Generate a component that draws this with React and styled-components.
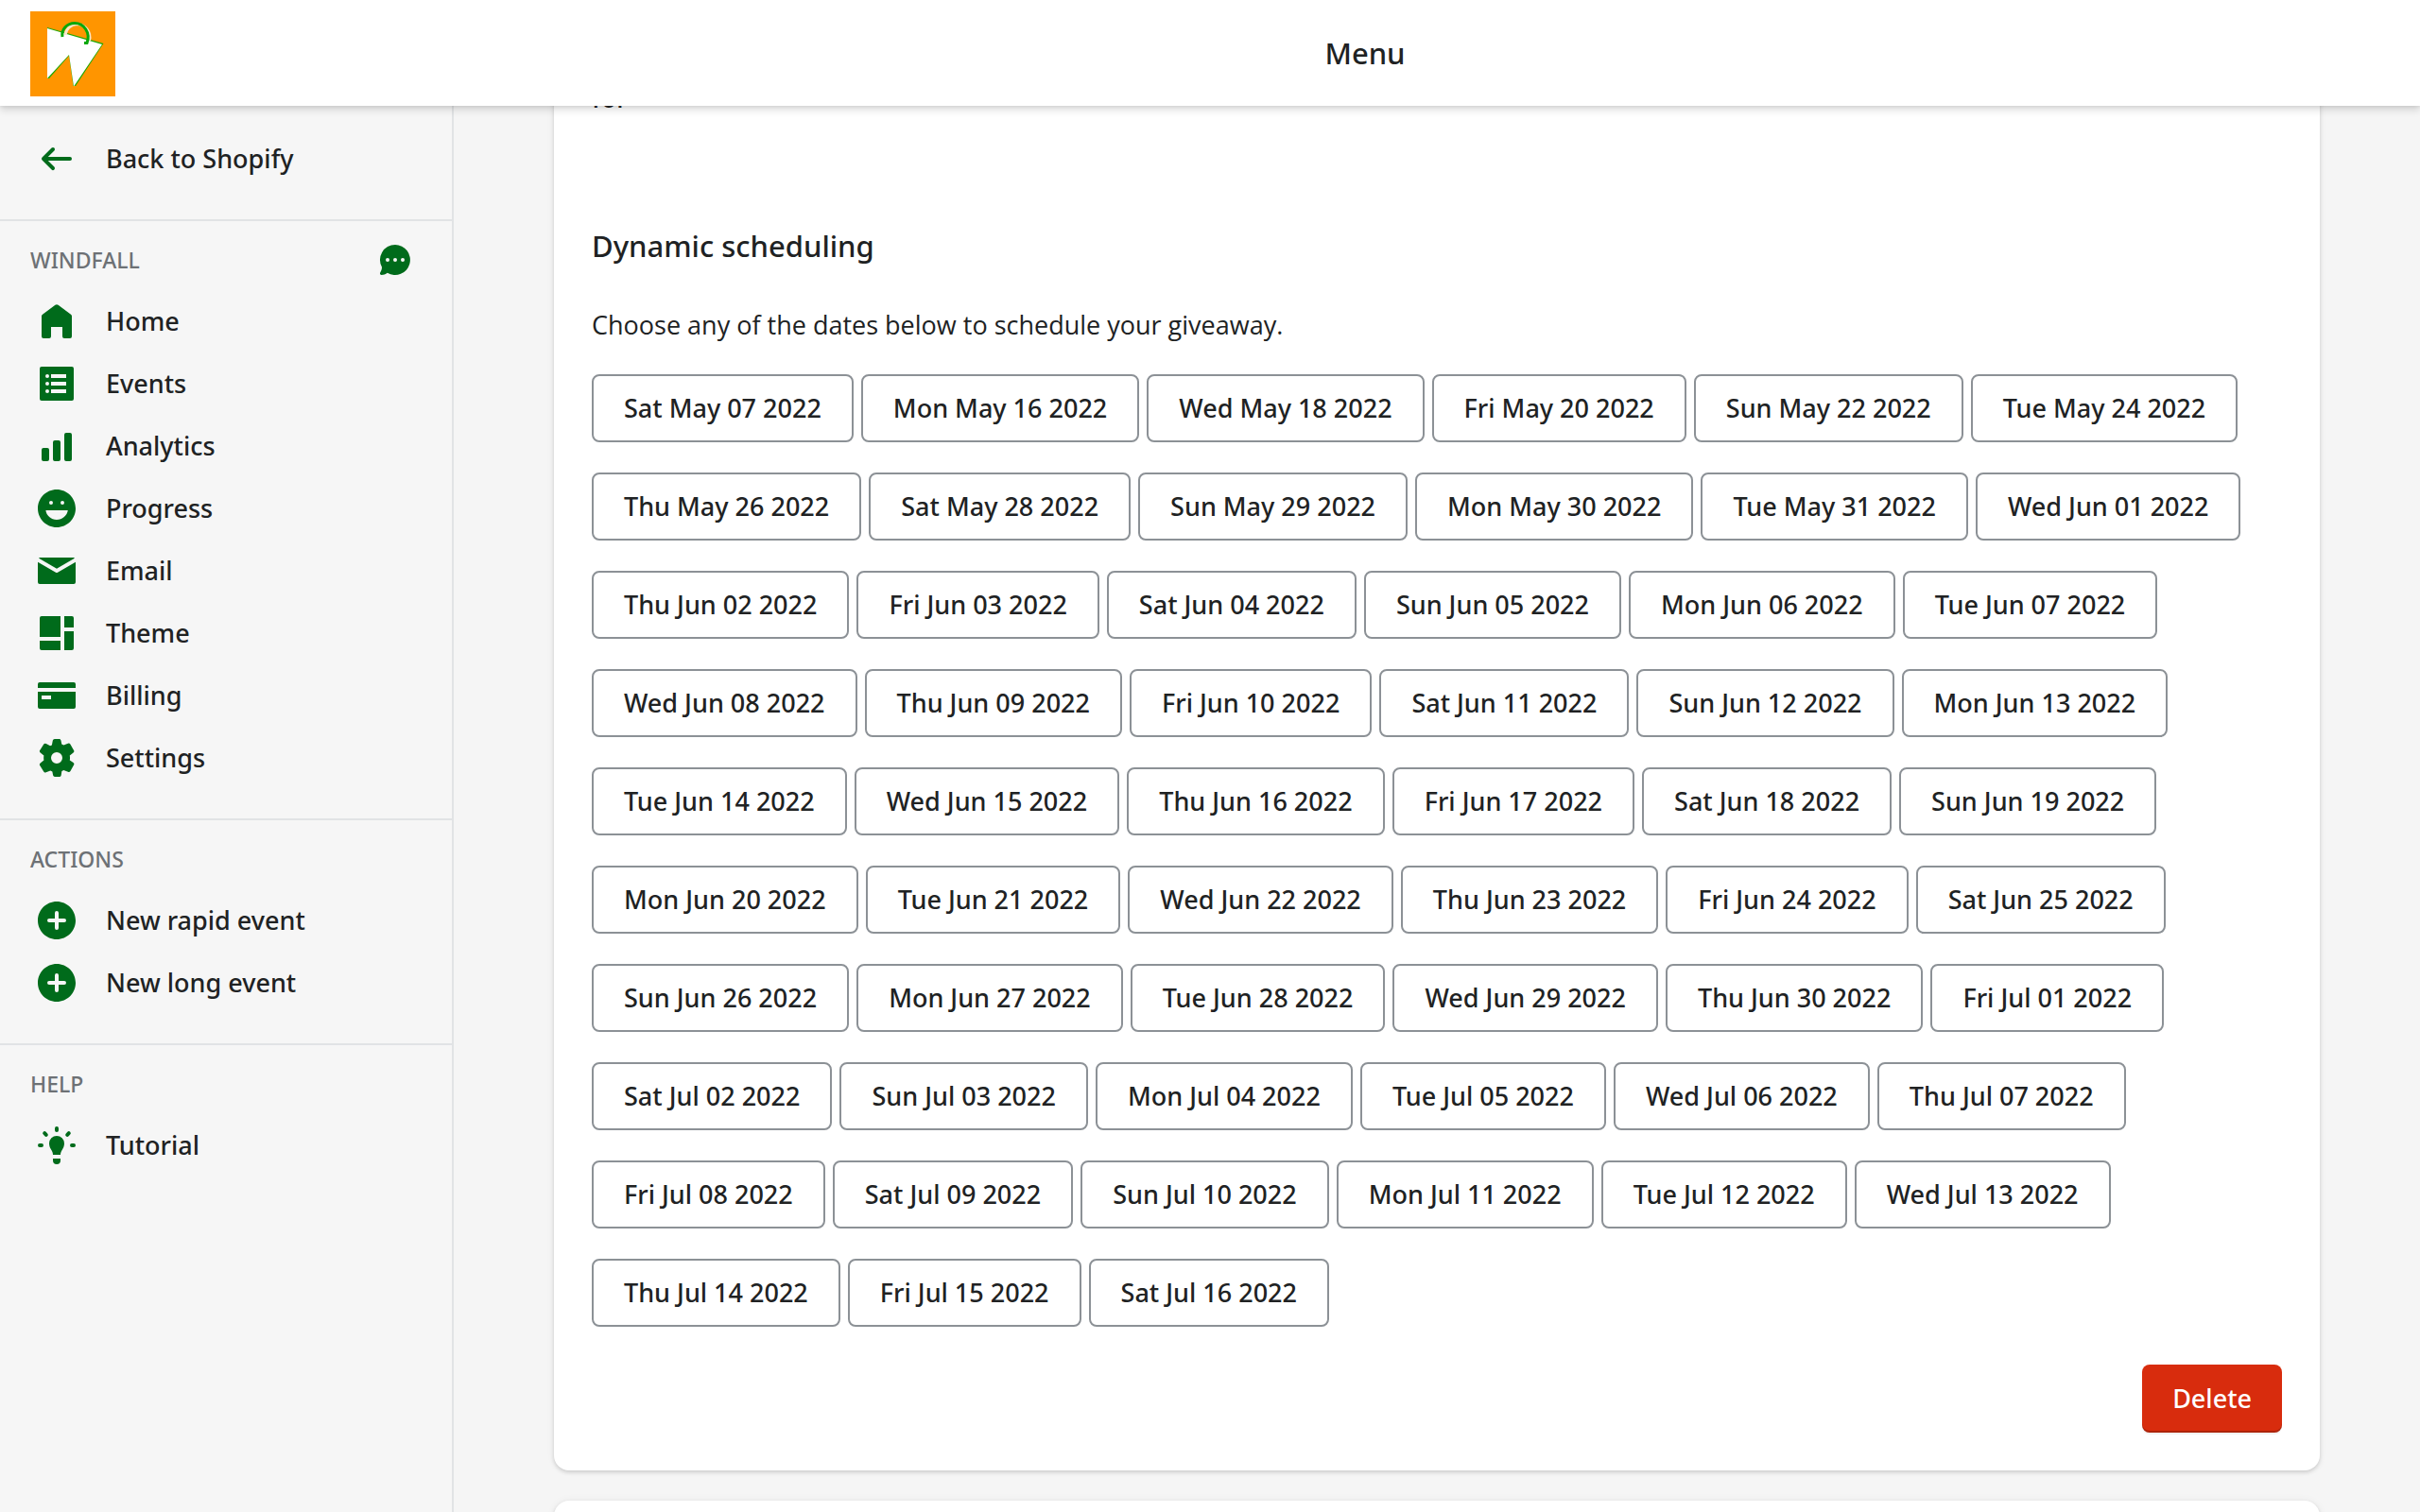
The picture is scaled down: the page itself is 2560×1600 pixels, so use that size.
import React from "react";
import styled, { createGlobalStyle } from "styled-components";

const Global = createGlobalStyle`
  *, *::before, *::after { box-sizing: border-box; }
  body {
    margin: 0;
    background: #f5f5f5;
    color: #202223;
    font-family: "Noto Sans", "Open Sans", sans-serif;
    font-size: 27px;
    line-height: 40px;
    overflow: hidden;
  }
  h1, h2, p, ul { margin: 0; padding: 0; }
`;

const Frame = styled.div`
  display: flex;
  flex-direction: column;
  height: 100vh;
`;

const TopBar = styled.header`
  display: flex;
  align-items: center;
  flex: 0 0 112px;
  background: #fff;
  box-shadow: 0 0 4px rgba(23, 24, 24, 0.1), 0 4px 8px rgba(0, 0, 0, 0.15);
  z-index: 1;
`;

const LogoLink = styled.a`
  display: flex;
  flex: 0 0 328px;
  padding: 2px 0 0 32px;
`;

const TopTitle = styled.h1`
  flex: 1;
  text-align: center;
  font-size: 31px;
  font-weight: 500;
`;

const Body = styled.div`
  display: flex;
  flex: 1;
  min-height: 0;
`;

const Sidebar = styled.nav`
  flex: 0 0 480px;
  background: #f6f6f6;
  border-right: 2px solid #e1e3e5;
`;

const NavSection = styled.section`
  padding: ${(p) => (p.$plain ? "23px" : "11px")} 0 31px;
  & + & { border-top: 2px solid #e1e3e5; }
`;

const SectionHead = styled.div`
  display: flex;
  align-items: center;
  justify-content: space-between;
  height: 60px;
  margin-bottom: 2px;
  padding: 0 40px 0 32px;
`;

const SectionTitle = styled.h2`
  color: #6d7175;
  font-size: 23px;
  font-weight: 500;
  text-transform: uppercase;
`;

const IconButton = styled.button`
  display: flex;
  padding: 0;
  border: 0;
  background: none;
  color: #006b1b;
`;

const NavList = styled.ul`
  list-style: none;
`;

const NavLink = styled.a`
  display: flex;
  align-items: center;
  gap: 32px;
  height: 66px;
  padding: 0 40px;
  color: #202223;
  font-weight: 500;
  text-decoration: none;
  svg { color: #006b1b; }
`;

const Main = styled.main`
  flex: 1;
  min-width: 0;
  overflow: hidden;
`;

const Page = styled.div`
  display: flex;
  flex-direction: column;
  gap: 32px;
  max-width: 1996px;
  margin: -28px auto 0;
  padding: 0 64px;
`;

const Card = styled.section`
  display: flex;
  flex-direction: column;
  min-height: 120px;
  padding: 0 40px 40px;
  background: #fff;
  border-radius: 16px;
  box-shadow: 0 0 10px rgba(23, 24, 24, 0.05), 0 2px 4px rgba(0, 0, 0, 0.15);
`;

const Unit = styled.p`
  margin-bottom: 116px;
  font-weight: 500;
`;

const CardTitle = styled.h2`
  margin-bottom: 44px;
  font-size: 31px;
  font-weight: 500;
`;

const Intro = styled.p`
  margin-bottom: 32px;
  font-family: "Open Sans", "Noto Sans", sans-serif;
`;

const DateGrid = styled.div`
  display: flex;
  flex-wrap: wrap;
  gap: 32px 8px;
  margin-bottom: 40px;
`;

const Button = styled.button`
  height: 72px;
  padding: 0 32px;
  border: 2px solid #8c9196;
  border-radius: 8px;
  background: #fff;
  color: #202223;
  font: inherit;
  font-weight: 500;
  white-space: nowrap;
`;

const DeleteButton = styled(Button)`
  align-self: flex-end;
  border: 0;
  background: #d82c0d;
  color: #fff;
  box-shadow: inset 0 -2px 0 rgba(0, 0, 0, 0.2), 0 2px 0 rgba(0, 0, 0, 0.05);
`;

const Svg = ({ children }) => (
  <svg width="40" height="40" viewBox="0 0 20 20" fill="currentColor" aria-hidden="true">
    {children}
  </svg>
);

const Dot = ({ x, y, r = 1, fill = "#f6f6f6" }) => <circle cx={x} cy={y} r={r} fill={fill} />;

const icons = {
  back: (
    <path d="M17 9H5.414l3.293-3.293a.999.999 0 1 0-1.414-1.414l-5 5a.999.999 0 0 0 0 1.414l5 5a.997.997 0 0 0 1.414 0 .999.999 0 0 0 0-1.414L5.414 11H17a1 1 0 1 0 0-2z" />
  ),
  home: (
    <path d="M18 7.261V18a1 1 0 0 1-1 1h-3a1 1 0 0 1-1-1V13H7v5a1 1 0 0 1-1 1H3a1 1 0 0 1-1-1V7.261a1.200 1.200 0 0 1 .5-.9l6.700-4.980a1.400 1.400 0 0 1 1.600 0l6.700 4.980a1.200 1.200 0 0 1 .5.9z" />
  ),
  events: (
    <path fillRule="evenodd" d="M2 1a1 1 0 0 0-1 1v16a1 1 0 0 0 1 1h16a1 1 0 0 0 1-1V2a1 1 0 0 0-1-1H2zm4 5a1 1 0 1 1-2 0 1 1 0 0 1 2 0zM5 11a1 1 0 1 0 0-2 1 1 0 0 0 0 2zm0 4a1 1 0 1 0 0-2 1 1 0 0 0 0 2zM7 5h8v2H7V5zm8 4H7v2h8V9zm-8 4h8v2H7v-2z" />
  ),
  analytics: (
    <path d="M15 3a1 1 0 0 0-1 1v13a1 1 0 0 0 1 1h2a1 1 0 0 0 1-1V4a1 1 0 0 0-1-1h-2zM9 7a1 1 0 0 0-1 1v9a1 1 0 0 0 1 1h2a1 1 0 0 0 1-1V8a1 1 0 0 0-1-1H9zm-6 4a1 1 0 0 0-1 1v5a1 1 0 0 0 1 1h2a1 1 0 0 0 1-1v-5a1 1 0 0 0-1-1H3z" />
  ),
  progress: (
    <path fillRule="evenodd" d="M0 10C0 4.486 4.486 0 10 0s10 4.486 10 10-4.486 10-10 10S0 15.514 0 10zm8-3a1 1 0 1 1-2 0 1 1 0 0 1 2 0zm5 1a1 1 0 1 0 0-2 1 1 0 0 0 0 2zM4.200 11c.300 2.800 2.800 5 5.800 5s5.500-2.200 5.900-5H4.200z" />
  ),
  email: (
    <>
      <path d="M0 5.324V16a1 1 0 0 0 1 1h18a1 1 0 0 0 1-1V5.324l-9.496 5.540a1 1 0 0 1-1.008 0L0 5.324z" />
      <path d="M19.443 3.334A.994.994 0 0 0 19 3H1a.994.994 0 0 0-.443.334L10 8.842l9.443-5.508z" />
    </>
  ),
  theme: (
    <path d="M1 2a1 1 0 0 1 1-1h10v11H1V2zm0 12h11v5H2a1 1 0 0 1-1-1v-4zm13 5h4a1 1 0 0 0 1-1V9h-5v10zm5-12V2a1 1 0 0 0-1-1h-4v6h5z" />
  ),
  billing: (
    <path fillRule="evenodd" d="M0 4a1 1 0 0 1 1-1h18a1 1 0 0 1 1 1v2H0V4zm0 4h20v8a1 1 0 0 1-1 1H1a1 1 0 0 1-1-1V8zm2 2h5v2H2v-2z" />
  ),
  settings: (
    <path fillRule="evenodd" d="M8.900 0a1 1 0 0 0-.98.800l-.48 2.400-.9.380-2.100-1.100a1 1 0 0 0-1.300.300L1.100 6a1 1 0 0 0 .25 1.300l1.850 1.500a6.800 6.800 0 0 0 0 2.400l-1.850 1.500a1 1 0 0 0-.25 1.300l2 3.300a1 1 0 0 0 1.270.380l2.300-.900 1 .500.400 2a1 1 0 0 0 .98.720h2.300a1 1 0 0 0 .98-.800l.350-2.200 1-.500 2.300.900a1 1 0 0 0 1.250-.400l1.800-3.200a1 1 0 0 0-.250-1.300L16.900 11.200a6.800 6.800 0 0 0 0-2.400l1.880-1.500a1 1 0 0 0 .250-1.300l-1.850-3.200a1 1 0 0 0-1.250-.400l-2.250.900-1.050-.600-.400-2a1 1 0 0 0-.98-.7H8.900zM10 13a3 3 0 1 0 0-6 3 3 0 0 0 0 6z" />
  ),
  plus: (
    <path fillRule="evenodd" d="M0 10C0 4.486 4.486 0 10 0s10 4.486 10 10-4.486 10-10 10S0 15.514 0 10zm5 0a1 1 0 0 1 1-1h3V6a1 1 0 1 1 2 0v3h3a1 1 0 1 1 0 2h-3v3a1 1 0 1 1-2 0v-3H6a1 1 0 0 1-1-1z" />
  ),
  bulb: (
    <>
      <path d="M10 0a1 1 0 0 0-1 1v1a1 1 0 1 0 2 0V1a1 1 0 0 0-1-1zM14 9c0 1.500-.6 2.500-1.200 3.500-.5.900-.8 1.600-.8 2.500H8c0-.9-.3-1.600-.8-2.500C6.600 11.500 6 10.500 6 9a4 4 0 1 1 8 0zM8 17h4v1a2 2 0 0 1-2 2 2 2 0 0 1-2-2v-1zM0 10a1 1 0 0 1 1-1h1a1 1 0 1 1 0 2H1a1 1 0 0 1-1-1zM18 9a1 1 0 1 0 0 2h1a1 1 0 1 0 0-2h-1z" />
      <path d="M3.600 3.600l.8.800M16.400 3.600l-.8.800" stroke="currentColor" strokeWidth="2" strokeLinecap="round" />
    </>
  ),
  chat: (
    <>
      <path d="M10 2a8 8 0 1 1-4.100 14.900c-1 .700-2.100 1.100-3.100 1.100-.700 0-1-.600-.7-1.200.4-.800.900-1.600.9-2.900A8 8 0 0 1 10 2z" />
      <Dot x={6} y={10} />
      <Dot x={10} y={10} />
      <Dot x={14} y={10} />
    </>
  ),
};

const Logo = () => (
  <svg width="90" height="90" viewBox="0 0 90 90" role="img" aria-label="Windfall">
    <rect width="90" height="90" fill="#ff9500" />
    <path d="M18 17L77.500 34L48 79L45.500 79L41 47L20 71L18 71z" fill="#21a800" />
    <path d="M18 18L76 35L46 79.500L41 46L18 71z" fill="#fff" />
    <path d="M37 25A13 13 0 0 1 49 13.500A14 14 0 0 1 62.500 31" fill="none" stroke="#fbe6c8" strokeWidth="3" />
    <path d="M34 27C32.500 19 39 12.500 47 12.500C57 12.500 64 23 60 33.500H57" fill="none" stroke="#0aa80a" strokeWidth="3" />
  </svg>
);

const sections = [
  { items: [["back", "Back to Shopify"]] },
  {
    title: "Windfall",
    chat: true,
    items: [
      ["home", "Home"],
      ["events", "Events"],
      ["analytics", "Analytics"],
      ["progress", "Progress"],
      ["email", "Email"],
      ["theme", "Theme"],
      ["billing", "Billing"],
      ["settings", "Settings"],
    ],
  },
  { title: "Actions", items: [["plus", "New rapid event"], ["plus", "New long event"]] },
  { title: "Help", items: [["bulb", "Tutorial"]] },
];

const days = ["Sun", "Mon", "Tue", "Wed", "Thu", "Fri", "Sat"];
const months = ["Jan", "Feb", "Mar", "Apr", "May", "Jun", "Jul"];

const formatDate = (d) =>
  `${days[d.getUTCDay()]} ${months[d.getUTCMonth()]} ${String(d.getUTCDate()).padStart(2, "0")} ${d.getUTCFullYear()}`;

const dailyDates = (from, to) => {
  const out = [];
  for (let t = from; t <= to; t += 86400000) out.push(formatDate(new Date(t)));
  return out;
};

const dates = [
  "Sat May 07 2022",
  "Mon May 16 2022",
  "Wed May 18 2022",
  "Fri May 20 2022",
  "Sun May 22 2022",
  "Tue May 24 2022",
  "Thu May 26 2022",
  ...dailyDates(Date.UTC(2022, 4, 28), Date.UTC(2022, 6, 16)),
];

export default function App() {
  return (
    <Frame>
      <Global />
      <TopBar>
        <LogoLink href="#home"><Logo /></LogoLink>
        <TopTitle>Menu</TopTitle>
      </TopBar>
      <Body>
        <Sidebar>
          {sections.map((s, i) => (
            <NavSection key={i} $plain={!s.title}>
              {s.title && (
                <SectionHead>
                  <SectionTitle>{s.title}</SectionTitle>
                  {s.chat && (
                    <IconButton type="button" aria-label="Chat"><Svg>{icons.chat}</Svg></IconButton>
                  )}
                </SectionHead>
              )}
              <NavList>
                {s.items.map(([icon, label]) => (
                  <li key={label}>
                    <NavLink href="#nav"><Svg>{icons[icon]}</Svg>{label}</NavLink>
                  </li>
                ))}
              </NavList>
            </NavSection>
          ))}
        </Sidebar>
        <Main>
          <Page>
            <Card>
              <Unit>for</Unit>
              <CardTitle>Dynamic scheduling</CardTitle>
              <Intro>Choose any of the dates below to schedule your giveaway.</Intro>
              <DateGrid>
                {dates.map((d) => <Button type="button" key={d}>{d}</Button>)}
              </DateGrid>
              <DeleteButton type="button">Delete</DeleteButton>
            </Card>
            <Card />
          </Page>
        </Main>
      </Body>
    </Frame>
  );
}
